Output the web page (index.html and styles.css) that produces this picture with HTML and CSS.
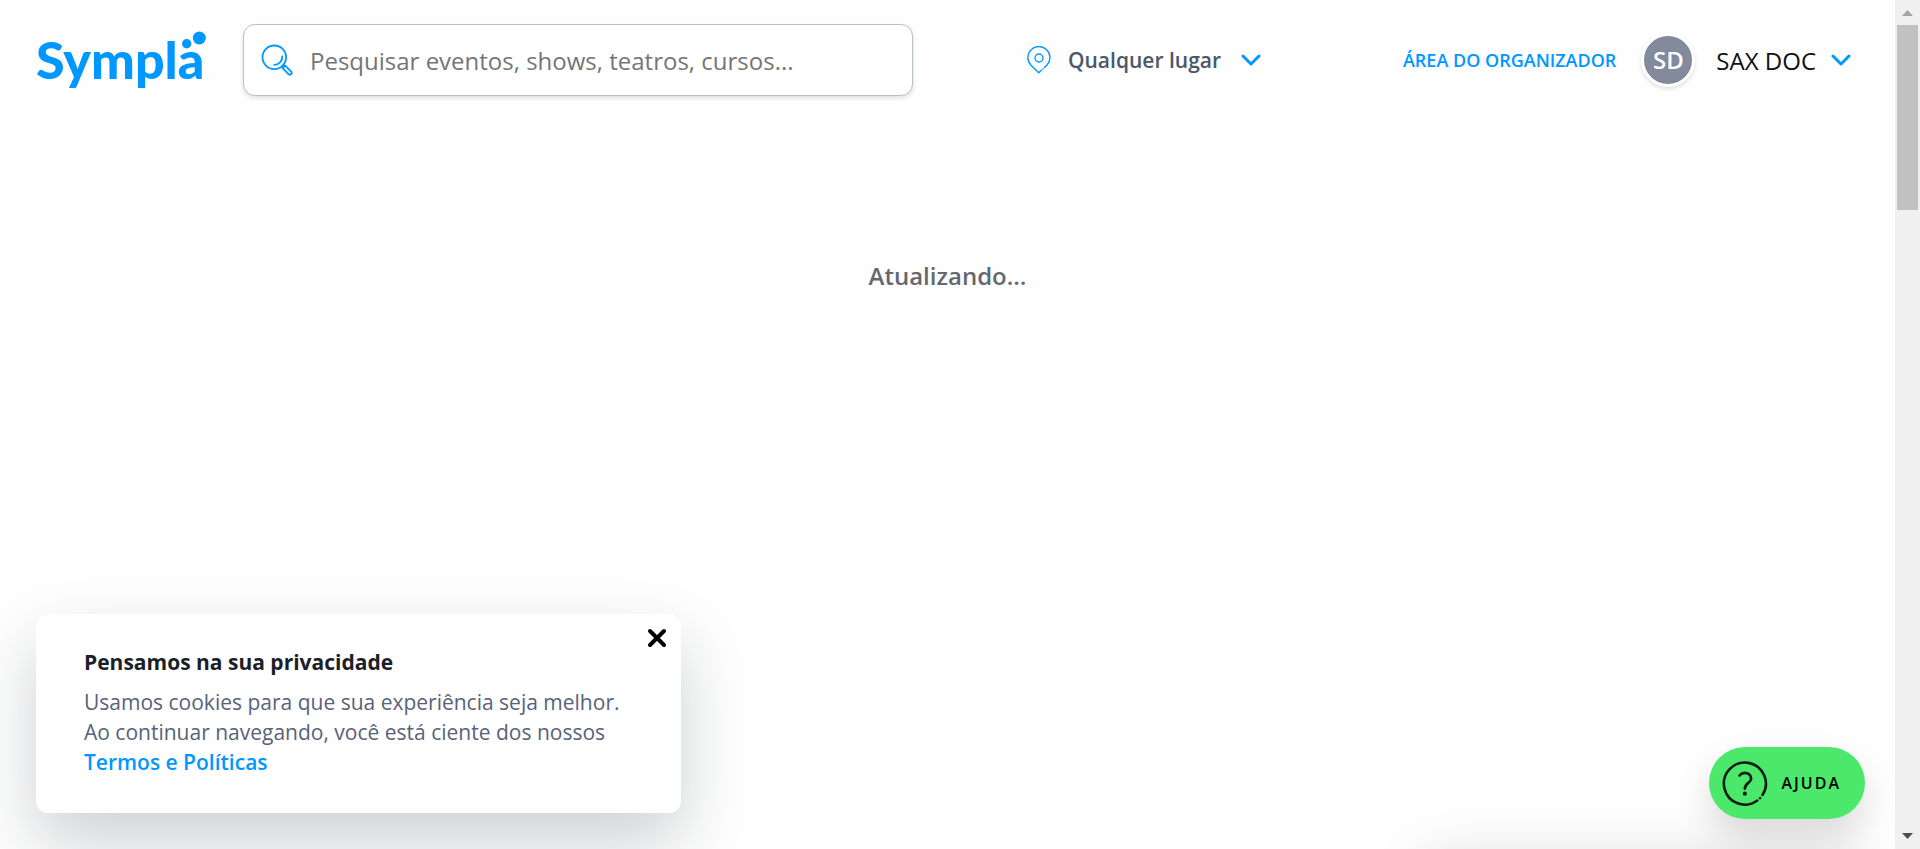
FILE: index.html
```html
<!DOCTYPE html>
<html lang="pt-BR">
<head>
<meta charset="utf-8">
<meta name="viewport" content="width=device-width, initial-scale=1">
<title>Sympla</title>
<link rel="stylesheet" href="styles.css">
</head>
<body>
<div class="shell">
  <div class="page">
    <header class="header">
      <a class="logo" href="#" aria-label="Sympla">
        <svg width="172" height="72" viewBox="0 -5 172 72">
          <text class="logo-text" x="0" y="50">Sympla</text>
          <circle cx="150.700" cy="14.700" r="4.700"/>
          <circle cx="163.300" cy="9" r="6.500"/>
        </svg>
      </a>
      <form class="search" role="search">
        <svg class="search-icon" width="32" height="32" viewBox="0 0 32 32">
          <circle cx="13.300" cy="13.300" r="11.800"/>
          <path d="M21.300 12.500a8 8 0 0 1-8 8.300"/>
          <path d="M21.700 21.700l1.200 1.200M21.400 23.900l6.300 6.400a1.850 1.850 0 0 0 2.600-2.600l-6.400-6.300z"/>
        </svg>
        <input class="search-input" type="search" aria-label="Pesquisar" placeholder="Pesquisar eventos, shows, teatros, cursos...">
      </form>
      <button class="place" type="button">
        <svg class="pin" width="24" height="28" viewBox="0 0 24 28">
          <path d="M17.500 21.500l2.700-2.700A11 11 0 1 0 4 19.200l7.700 7.600 2.600-2.500"/>
          <path d="M15.900 22.900l.1-.1"/>
          <circle cx="12" cy="12" r="4"/>
        </svg>
        <span>Qualquer lugar</span>
        <svg class="chevron" width="20" height="12" viewBox="0 0 20 12"><path d="M2 2l8 8 8-8"/></svg>
      </button>
      <div class="account">
        <a class="organizer" href="#">ÁREA DO ORGANIZADOR</a>
        <button class="user" type="button">
          <span class="avatar">SD</span>
          <span class="user-name">SAX DOC</span>
          <svg class="chevron" width="20" height="12" viewBox="0 0 20 12"><path d="M2 2l8 8 8-8"/></svg>
        </button>
      </div>
    </header>
    <main class="status">Atualizando...</main>
    <section class="cookies">
      <button class="close" type="button" aria-label="Fechar">
        <svg width="20" height="20" viewBox="0 0 20 20"><path d="M3 3l14 14M17 3L3 17"/></svg>
      </button>
      <h2 class="cookies-title">Pensamos na sua privacidade</h2>
      <p class="cookies-text">Usamos cookies para que sua experiência seja melhor. Ao continuar navegando, você está ciente dos nossos <a class="cookies-link" href="#">Termos e Políticas</a></p>
    </section>
    <div class="toast"></div>
    <button class="help" type="button">
      <svg width="46" height="46" viewBox="0 0 46 46">
        <path d="M35.300 40.500A21 21 0 1 1 40.500 35"/>
        <path d="M38 38.200l.1-.1"/>
        <path d="M17.500 15.500c2-2.500 5-3 7.500-2.300 3.500 1 5 4.500 3.500 7.300-1.500 2.700-5.500 3.300-5.700 8.300"/>
        <circle class="dot" cx="22.800" cy="33.700" r="2.100"/>
      </svg>
      <span>AJUDA</span>
    </button>
  </div>
  <div class="scrollbar" aria-hidden="true">
    <svg class="arrow-up" width="11" height="6" viewBox="0 0 11 6"><path d="M0 6L5.500 0 11 6z"/></svg>
    <div class="thumb"></div>
    <svg class="arrow-down" width="11" height="6" viewBox="0 0 11 6"><path d="M0 0L5.500 6 11 0z"/></svg>
  </div>
</div>
</body>
</html>
```
FILE: styles.css
```css
* { box-sizing: border-box; }
body {
  margin: 0;
  font-family: "Open Sans", "Noto Sans", sans-serif;
  background: #fefefe;
  color: #1b1f27;
}
button {
  font-family: inherit;
  border: 0;
  background: none;
  padding: 0;
  cursor: pointer;
}
a { text-decoration: none; }
svg { display: block; flex: none; }

.shell { display: flex; height: 100vh; overflow: hidden; }
.page { position: relative; flex: 1; overflow: hidden; }

.header {
  display: flex;
  align-items: center;
  padding: 24px 44px 24px 36px;
}
.logo { width: 207px; flex: none; }
.logo svg { fill: #0097ff; overflow: visible; }
.logo-text { font: 900 52px Lato, sans-serif; }

.search {
  display: flex;
  align-items: center;
  width: 670px;
  height: 72px;
  padding: 0 17px;
  gap: 17px;
  border: 1px solid #bac0c8;
  border-radius: 12px;
  background: #fff;
  box-shadow: 0 2px 4px rgba(30, 40, 50, .14);
}
.search-icon, .pin, .chevron {
  fill: none;
  stroke: #0097ff;
  stroke-linecap: round;
  stroke-linejoin: round;
}
.search-icon { stroke-width: 1.800; }
.search-input {
  flex: 1;
  min-width: 0;
  border: 0;
  outline: 0;
  padding: 0;
  background: none;
  font: 400 24px "Open Sans", sans-serif;
}
.search-input::placeholder { color: #757575; }

.place {
  display: flex;
  align-items: center;
  margin-left: 114px;
  font-size: 21px;
  font-weight: 600;
  color: #4c576c;
}
.pin { stroke-width: 1.400; margin-right: 17px; }
.chevron { stroke-width: 3; }
.place .chevron { margin-left: 20px; }

.account { display: flex; align-items: center; margin-left: auto; }
.organizer { font-size: 18px; font-weight: 600; color: #0097ff; }
.user { display: flex; align-items: center; margin-left: 25px; }
.avatar {
  width: 54px;
  height: 54px;
  border: 3px solid #fff;
  border-radius: 50%;
  background: #828a9b;
  box-shadow: 0 2px 4px rgba(0, 0, 0, .12);
  color: #fff;
  font-size: 24px;
  font-weight: 600;
  line-height: 48px;
}
.user-name { margin: 0 15px 0 21px; font-size: 24px; font-weight: 400; color: #111; }

.status {
  padding-top: 139px;
  text-align: center;
  font-size: 24px;
  font-weight: 600;
  line-height: 34px;
  color: #646870;
}

.cookies {
  position: absolute;
  left: 36px;
  bottom: 36px;
  width: 645px;
  padding: 33px 48px 36px;
  border-radius: 12px;
  background: #fff;
  box-shadow: 0 30px 66px rgba(20, 30, 40, .2);
}
.close { position: absolute; top: 14px; right: 14px; }
.close svg { fill: none; stroke: #000; stroke-width: 4; stroke-linecap: round; }
.cookies-title { margin: 0 0 10px; font-size: 21px; font-weight: 700; line-height: 30px; }
.cookies-text { margin: 0; font-size: 21px; font-weight: 400; line-height: 30px; color: #58627a; }
.cookies-link { display: block; font-weight: 600; color: #0097ff; }

.toast {
  position: absolute;
  right: 36px;
  top: 100%;
  width: 430px;
  height: 90px;
  box-shadow: 0 18px 60px rgba(0, 0, 0, .2);
}
.help {
  position: absolute;
  right: 30px;
  bottom: 30px;
  display: flex;
  align-items: center;
  gap: 13px;
  height: 72px;
  padding: 0 24px 0 13px;
  border-radius: 36px;
  background: #4be86b;
  box-shadow: 0 18px 36px rgba(0, 0, 0, .14);
  font-size: 16px;
  font-weight: 600;
  letter-spacing: 2px;
  color: #000;
}
.help svg { fill: none; stroke: #0b1d10; stroke-width: 2.600; stroke-linecap: round; }
.help .dot { fill: #0b1d10; stroke: none; }

.scrollbar {
  display: flex;
  flex-direction: column;
  align-items: center;
  width: 25px;
  padding: 10px 0;
  background: #f0f0f0;
}
.thumb { width: 21px; height: 185px; margin-top: 9px; background: #c1c1c1; }
.arrow-up { fill: #a3a3a3; }
.arrow-down { fill: #505050; margin-top: auto; }
```
